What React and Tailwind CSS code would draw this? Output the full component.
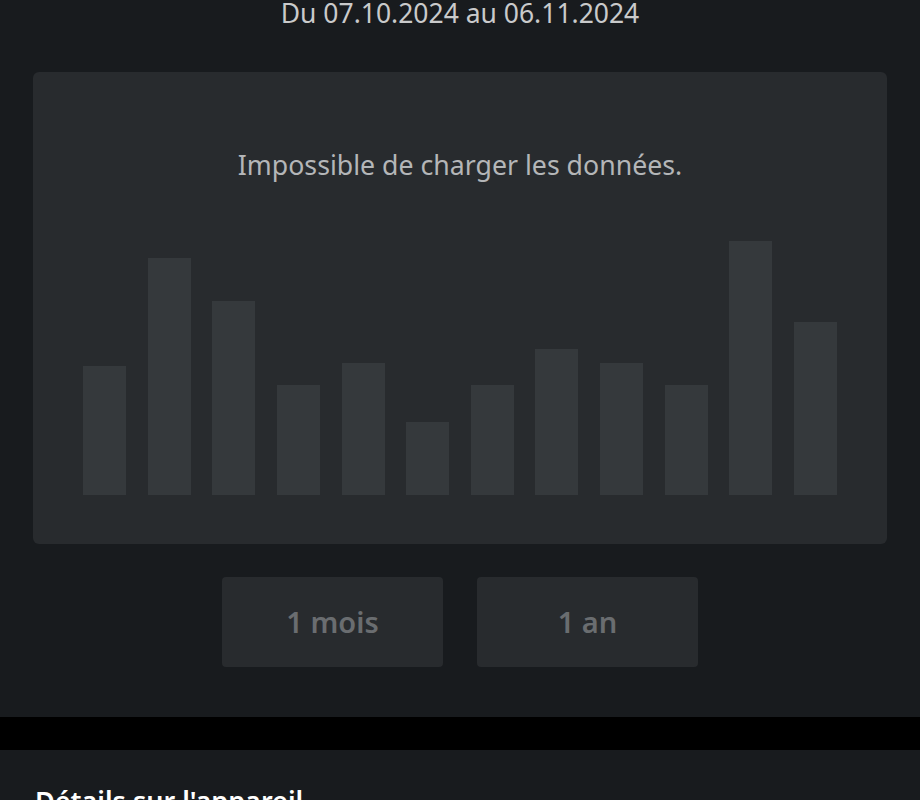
export default function App() {
  const bars = [129, 237, 194, 110, 132, 73, 110, 146, 132, 110, 254, 173];
  return (
    <div className="w-[920px] min-h-[800px] bg-black" style={{ fontFamily: '"Noto Sans", sans-serif' }}>
      <section className="bg-[#181b1e] pb-[50px]">
        <div className="-mt-[2px] text-center text-[26.5px] leading-[30px] text-[#c9cacb]">
          Du 07.10.2024 au 06.11.2024
        </div>
        <div className="mx-[33px] mt-[44px] rounded-[6px] bg-[#282b2e] pt-[78px] pb-[49px]">
          <div className="text-center text-[26.7px] leading-[30px] text-[#b4b6b8]">
            Impossible de charger les données.
          </div>
          <div className="mt-[61px] flex h-[254px] items-end justify-between px-[50px]">
            {bars.map((h, i) => (
              <div key={i} className="w-[43px] bg-[#35393c]" style={{ height: h }} />
            ))}
          </div>
        </div>
        <div className="mt-[33px] flex justify-center gap-[34px]">
          <button className="flex h-[90px] w-[221px] items-center justify-center rounded-[4px] bg-[#282b2e] text-[29px] font-semibold text-[#6a6d70]">
            1 mois
          </button>
          <button className="flex h-[90px] w-[221px] items-center justify-center rounded-[4px] bg-[#282b2e] text-[29px] font-semibold text-[#6a6d70]">
            1 an
          </button>
        </div>
      </section>
      <div className="h-[33px] bg-black" />
      <section className="bg-[#181b1e] px-[35px] pt-[36px] pb-[40px]">
        <h2 className="text-[27px] leading-[30px] font-semibold text-white">Détails sur l'appareil</h2>
      </section>
    </div>
  );
}
